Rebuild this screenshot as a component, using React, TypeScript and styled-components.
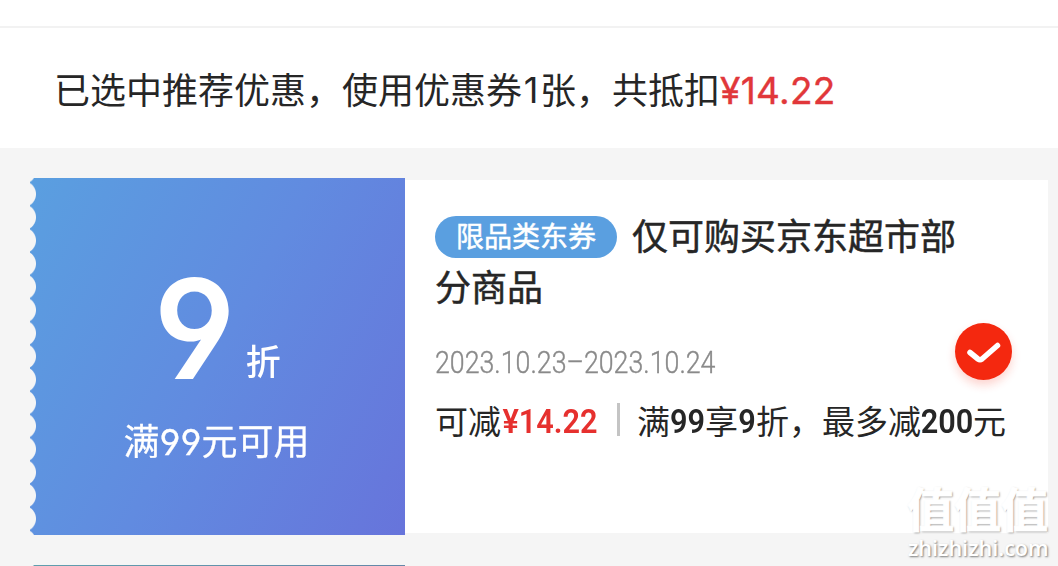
import React from 'react';
import styled, { createGlobalStyle } from 'styled-components';

const GlobalStyle = createGlobalStyle`
  * {
    box-sizing: border-box;
  }

  body {
    margin: 0;
    background: #f5f5f5;
    font-family: Inter, 'Noto Sans CJK SC', sans-serif;
    color: #262626;
    overflow: hidden;
  }
`;

const Page = styled.div`
  position: relative;
  width: 1058px;
  height: 566px;
  overflow: hidden;
`;

const TopStrip = styled.div`
  height: 28px;
  background: #fff;
  border-bottom: 2px solid #f2f2f2;
`;

const Summary = styled.div`
  display: flex;
  align-items: center;
  height: 120px;
  padding: 0 54px 1px;
  background: #fff;
  font-family: 'Noto Sans CJK SC', sans-serif;
  font-size: 36px;
  line-height: 52px;
  white-space: nowrap;
`;

const Count = styled.span`
  width: 18px;
  padding-top: 5px;
  font-family: Inter, sans-serif;
  text-align: center;
`;

const SummaryAmount = styled.span`
  padding-top: 6px;
  font-family: Inter, sans-serif;
  font-size: 37px;
  letter-spacing: 0.3px;
  color: #e1373a;
  -webkit-text-stroke: 0.4px currentColor;
`;

const CouponList = styled.div`
  display: flex;
  flex-direction: column;
  gap: 30px;
  padding: 30px 10px 0 30px;
`;

const Coupon = styled.div`
  display: flex;
  align-items: center;
  height: 357px;
`;

const Value = styled.div<{ $next?: boolean }>`
  display: flex;
  flex-direction: column;
  align-items: center;
  width: 375px;
  height: 357px;
  flex: none;
  color: #fff;
  background: ${(props) =>
    props.$next
      ? 'linear-gradient(90deg, #5f9fae, #6487a8)'
      : 'linear-gradient(118deg, #5a9fe0 0%, #618be0 50%, #6774db 100%)'};
  mask: radial-gradient(circle at -7px 50%, transparent 12.5px, #000 13.5px) 0 4.5px / 100% 23.2px;
`;

const Discount = styled.div`
  display: flex;
  align-items: baseline;
  gap: 9px;
  height: 150px;
  margin-top: 76px;
  margin-right: 1px;
  line-height: 150px;
`;

const DiscountNumber = styled.span`
  font-family: Inter, sans-serif;
  font-size: 138px;
  font-weight: 600;
  font-feature-settings: 'cv04';
  transform: scaleX(0.98);
`;

const DiscountUnit = styled.span`
  font-family: 'Noto Sans CJK SC', sans-serif;
  font-size: 35px;
  font-weight: 500;
  transform: translateY(-4px);
`;

const Condition = styled.div`
  margin-top: 12px;
  margin-right: 2px;
  font-size: 36px;
  line-height: 52px;
  font-feature-settings: 'cv04';
  -webkit-text-stroke: 0.3px currentColor;
`;

const Detail = styled.div`
  flex: 1;
  height: 353px;
  padding: 29px 30px 0;
  background: #fff;
`;

const Title = styled.div`
  width: 540px;
  font-family: 'Noto Sans CJK SC', sans-serif;
  font-size: 36px;
  line-height: 51px;
  -webkit-text-stroke: 0.5px currentColor;
`;

const Tag = styled.span`
  display: inline-block;
  width: 182px;
  height: 42px;
  margin: 7px 15px 0 0;
  border-radius: 21px;
  background: #5a9fe0;
  color: #fff;
  font-size: 28px;
  line-height: 39px;
  text-align: center;
  vertical-align: top;
`;

const DateRow = styled.div`
  display: flex;
  align-items: center;
  justify-content: space-between;
  height: 57px;
  margin-top: 12px;
  padding-right: 6px;
`;

const Period = styled.span`
  margin-top: 23px;
  font-family: Roboto, sans-serif;
  font-size: 31px;
  font-weight: 300;
  line-height: 36px;
  color: #8a8a8a;
  white-space: nowrap;
  transform: scaleX(0.863);
  transform-origin: left;
  -webkit-text-stroke: 0.4px currentColor;
`;

const Check = styled.span`
  display: flex;
  width: 57px;
  height: 57px;
  border-radius: 50%;
  background: #f4280f;
  box-shadow: 0 5px 10px rgba(244, 40, 15, 0.2);
`;

const Terms = styled.div`
  display: flex;
  align-items: center;
  height: 48px;
  margin-top: 16px;
  font-family: 'Noto Sans CJK SC', sans-serif;
  font-size: 33px;
  line-height: 48px;
  white-space: nowrap;
`;

const Figure = styled.b<{ $width: number; $red?: boolean }>`
  display: flex;
  justify-content: center;
  width: ${(props) => props.$width}px;
  padding-top: 3px;
  font-family: Roboto, sans-serif;
  font-size: 33px;
  font-weight: 600;
  transform: scaleX(0.93);
  color: ${(props) => (props.$red ? '#e6302e' : 'inherit')};
`;

const Divider = styled.span`
  width: 3px;
  height: 33px;
  margin: -2px 17px 0 18px;
  background: #c4c4c4;
`;

const Watermark = styled.div`
  position: absolute;
  left: 907px;
  top: 482px;
  width: 143px;
  color: #fff;
  text-shadow: 1px 1px 2px rgba(0, 0, 0, 0.5);
  white-space: nowrap;
`;

const WatermarkName = styled.div`
  font-family: 'Noto Sans CJK SC', sans-serif;
  font-size: 47px;
  font-weight: 700;
  line-height: 50px;
  -webkit-text-stroke: 1px #fff;
`;

const WatermarkSite = styled.div`
  padding-left: 1px;
  font-family: 'Open Sans', sans-serif;
  font-size: 21.6px;
  font-weight: 600;
  line-height: 31px;
`;

const CheckMark = () => (
  <svg width='57' height='57' viewBox='0 0 57 57' fill='none'>
    <path
      d='M15 29.5 L23 36 Q25 37.5 27 36 L42.5 22.5'
      stroke='#fff'
      strokeWidth='5.5'
      strokeLinecap='round'
      strokeLinejoin='round'
    />
  </svg>
);

const App = () => (
  <>
    <GlobalStyle />
    <Page>
      <TopStrip />
      <Summary>
        已选中推荐优惠，使用优惠券<Count>1</Count>张，共抵扣
        <SummaryAmount>¥14.22</SummaryAmount>
      </Summary>
      <CouponList>
        <Coupon>
          <Value>
            <Discount>
              <DiscountNumber>9</DiscountNumber>
              <DiscountUnit>折</DiscountUnit>
            </Discount>
            <Condition>满99元可用</Condition>
          </Value>
          <Detail>
            <Title>
              <Tag>限品类东券</Tag>仅可购买京东超市部分商品
            </Title>
            <DateRow>
              <Period>2023.10.23–2023.10.24</Period>
              <Check>
                <CheckMark />
              </Check>
            </DateRow>
            <Terms>
              可减
              <Figure $width={98} $red>
                ¥14.22
              </Figure>
              <Divider />
              满<Figure $width={35}>99</Figure>享<Figure $width={18}>9</Figure>折，最多减
              <Figure $width={52}>200</Figure>元
            </Terms>
          </Detail>
        </Coupon>
        <Coupon>
          <Value $next />
        </Coupon>
      </CouponList>
      <Watermark>
        <WatermarkName>值值值</WatermarkName>
        <WatermarkSite>zhizhizhi.com</WatermarkSite>
      </Watermark>
    </Page>
  </>
);

export default App;
